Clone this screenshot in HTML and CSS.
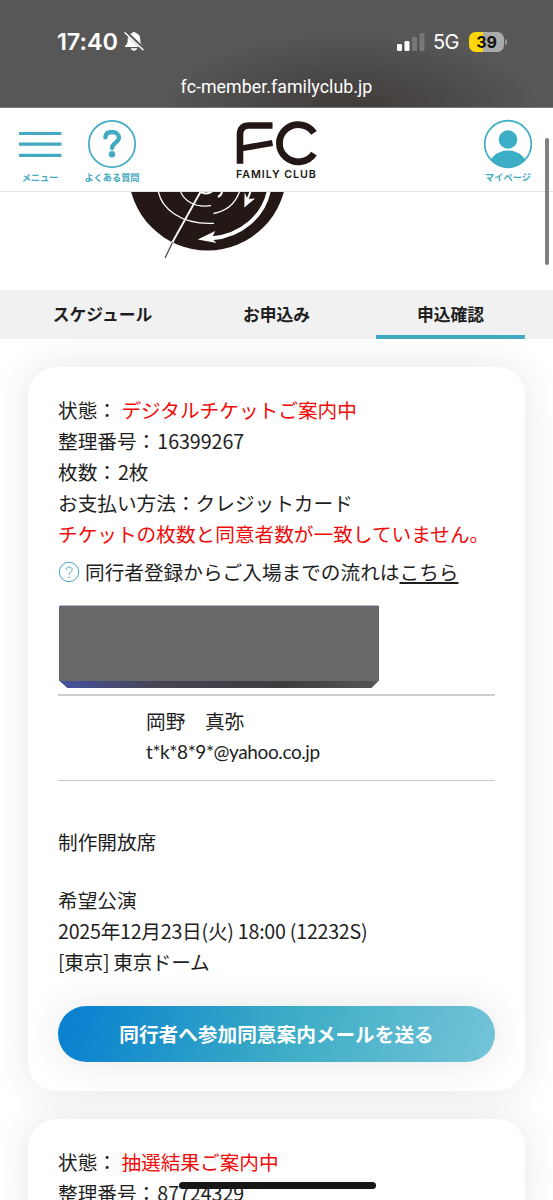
FILE: index.html
```html
<!DOCTYPE html>
<html lang="ja">
<head>
<meta charset="utf-8">
<title>FAMILY CLUB</title>
<link rel="stylesheet" href="styles.css">
</head>
<body>
<div class="browser">
  <div class="status">
    <div class="clock">
      <span class="time">17:40</span>
      <svg class="bell" viewBox="0 0 20 21" width="20" height="21"><path d="M1 15c2.200-2 2.700-3 2.700-6.500C3.700 4.500 6 2.500 8.300 2 8.500.5 11.500.5 11.700 2 14 2.500 16.300 4.500 16.300 8.500c0 3.500.5 4.500 2.700 6.500v1H1zM6.800 17.300h6.400c-.4 3.300-6 3.300-6.400 0z" fill="#fff"/><path d="M1.500 1l18 17" stroke="#555" stroke-width="3.600"/><path d="M1 1.800l18 17" stroke="#fff" stroke-width="1.500" stroke-linecap="round"/></svg>
    </div>
    <div class="radio">
      <svg class="bars" viewBox="0 0 28 18" width="28" height="18"><rect x="0" y="11" width="5" height="7" rx="1.300" fill="#fff"/><rect x="7.500" y="8" width="5" height="10" rx="1.300" fill="#fff"/><rect x="15" y="4" width="5" height="14" rx="1.300" fill="#777"/><rect x="22.500" y="0" width="5" height="18" rx="1.300" fill="#777"/></svg>
      <span class="network">5G</span>
      <span class="battery">39</span><span class="battery-tip"></span>
    </div>
  </div>
  <div class="address">fc-member.familyclub.jp</div>
</div>

<header class="header">
  <a class="nav nav-menu">
    <svg viewBox="0 0 44 50" width="44" height="50"><path d="M1 14.500h42.500M1 25.200h42.500M1 36.300h42.500" stroke="#42aac1" stroke-width="3.200"/></svg>
    <span>メニュー</span>
  </a>
  <a class="nav nav-faq">
    <svg viewBox="0 0 50 50" width="50" height="50"><circle cx="25" cy="25" r="23.200" fill="none" stroke="#42aac1" stroke-width="1.700"/><path d="M18.400 18.300c.2-3.700 3-5.300 6.700-5.300 3.900 0 6.800 2.200 6.800 5.800 0 5-6.900 5-6.900 10.400" fill="none" stroke="#42aac1" stroke-width="4.300" stroke-linecap="round"/><circle cx="25" cy="35.300" r="3.200" fill="#42aac1"/></svg>
    <span>よくある質問</span>
  </a>
  <div class="brand">
    <svg viewBox="0 0 82 46" width="82" height="46"><path d="M4 42.800V13.500q0-9 9-9H36.500" fill="none" stroke="#231815" stroke-width="6.600"/><path d="M4 27.600L36.500 22" fill="none" stroke="#231815" stroke-width="6"/><path d="M78 11.800A18.900 18.600 0 1 0 78 32.600" fill="none" stroke="#231815" stroke-width="6.800"/></svg>
    <span class="brand-name">FAMILY CLUB</span>
  </div>
  <a class="nav nav-mypage">
    <svg viewBox="0 0 50 50" width="50" height="50"><clipPath id="face"><circle cx="25" cy="25" r="23.500"/></clipPath><g clip-path="url(#face)" fill="#3badc5"><circle cx="25" cy="20.500" r="9.300"/><ellipse cx="25" cy="48" rx="19" ry="16.500"/></g><circle cx="25" cy="25" r="23.300" fill="none" stroke="#3badc5" stroke-width="1.700"/></svg>
    <span>マイページ</span>
  </a>
</header>
<div class="scrollbar"></div>

<div class="hero">
  <svg viewBox="0 192 553 98" width="553" height="98">
    <circle cx="207.500" cy="171.500" r="79" fill="#231815"/>
    <g fill="none" stroke="#fff">
      <path d="M158 190c3 18 22 35 56 33.300" stroke-width="1.300"/>
      <path d="M180 190c3 10 14 18 31 15.700" stroke-width="1.200"/>
      <path d="M240 190c-4 13-13 21-26.500 23.500" stroke-width="1.300"/>
      <path d="M200 191.500q6 4 12 0" stroke-width="2"/>
      <path d="M222 191q0 4-4 6" stroke-width="2"/>
      <path d="M269 190c-5 26-28 46-57 48.300" stroke-width="4"/>
      <path d="M251 190l-4 11" stroke-width="2"/>
      <path d="M201 191l-29 52" stroke-width="1.900"/>
    </g>
    <path d="M197.700 239.500l17.500-8.500-3.500 7.500 5 4.500zM244.300 207.500l.3-15 3 6.500 7.500-.5z" fill="#fff"/>
    <path d="M172.500 242.500l-7.500 15.500" stroke="#514845" stroke-width="1.300"/>
  </svg>
</div>

<nav class="tabs">
  <a class="tab">スケジュール</a>
  <a class="tab">お申込み</a>
  <a class="tab tab-active">申込確認</a>
</nav>

<main class="list">
  <section class="card">
    <p>状態： <span class="alert">デジタルチケットご案内中</span></p>
    <p>整理番号：<span class="num">16399267</span></p>
    <p>枚数：<span class="num">2</span>枚</p>
    <p>お支払い方法：クレジットカード</p>
    <p class="alert">チケットの枚数と同意者数が一致していません。</p>
    <p class="guide"><svg viewBox="0 0 22 22" width="22" height="22"><circle cx="11" cy="11" r="9.700" fill="none" stroke="#42aac1"/><path d="M8 9c0-4 6.200-4 6.200-.3 0 2.500-3.200 2.800-3.200 5.100" fill="none" stroke="#42aac1"/><circle cx="11" cy="16.200" r=".8" fill="#42aac1"/></svg><span>同行者登録からご入場までの流れは<a class="link">こちら</a></span></p>
    <div class="masked"></div>
    <div class="companion">
      <p>岡野　真弥</p>
      <p class="mail">t*k*8*9*@yahoo.co.jp</p>
    </div>
    <p class="seat">制作開放席</p>
    <p class="wish">希望公演</p>
    <p class="date">2025年12月23日(火) 18:00 (12232S)</p>
    <p class="venue">[東京] 東京ドーム</p>
    <a class="button">同行者へ参加同意案内メールを送る</a>
  </section>
  <section class="card">
    <p>状態： <span class="alert">抽選結果ご案内中</span></p>
    <p>整理番号：<span class="num">87724329</span></p>
  </section>
</main>
<div class="home-indicator"></div>
</body>
</html>
```
FILE: styles.css
```css
* { box-sizing: border-box; }
body {
  margin: 0;
  width: 553px;
  height: 1200px;
  overflow: hidden;
  position: relative;
  background: #fff;
  color: #1e1e1e;
  font-family: "Noto Sans CJK JP", sans-serif;
}
p { margin: 0; }

.browser {
  height: 108px;
  padding-top: 26px;
  border-bottom: 1px solid #777;
  background: radial-gradient(ellipse 190px 75px at 350px 108px, #3f3b39, rgba(63, 59, 57, 0)), #575757;
  color: #fff;
  font-family: Inter, sans-serif;
}
.status {
  display: flex;
  justify-content: space-between;
  align-items: center;
  height: 31px;
  padding: 0 46px 0 57px;
}
.clock, .radio { display: flex; align-items: center; }
.time { font-size: 23.5px; font-weight: 600; letter-spacing: -0.1px; }
.bell { margin-left: 6px; }
.network { margin-left: 8px; font-size: 20px; letter-spacing: -0.5px; }
.battery {
  width: 35px;
  height: 20px;
  margin-left: 10px;
  border-radius: 6.5px;
  background: linear-gradient(90deg, #ffd60a 14px, #aaa 14px);
  color: #111;
  font-size: 16px;
  font-weight: 700;
  line-height: 20px;
  text-align: center;
}
.battery-tip { width: 2px; height: 6px; margin-left: 1px; border-radius: 0 2px 2px 0; background: #999; }
.address {
  margin-top: 19px;
  font-family: Roboto, sans-serif;
  font-size: 17.8px;
  line-height: 21px;
  letter-spacing: 0.05px;
  text-align: center;
}

.header {
  display: grid;
  grid-template-columns: 44px 56px 1fr 50px;
  column-gap: 22px;
  height: 84px;
  padding: 11px 20px 0 18px;
  border-bottom: 1px solid #e4e4e4;
}
.nav {
  display: flex;
  flex-direction: column;
  align-items: center;
  height: 66px;
  color: #42aac1;
  font-size: 9.2px;
  font-weight: 700;
  line-height: 14px;
  white-space: nowrap;
}
.nav svg { flex: none; height: 50px; }
.nav span { margin-top: 1px; }
.brand { width: 82px; margin: 2px 0 0 74px; color: #231815; }
.brand svg { display: block; }
.brand-name {
  display: block;
  width: 84px;
  margin-top: 1px;
  font: 600 10.7px/14px Inter, sans-serif;
  letter-spacing: 0.95px;
  white-space: nowrap;
}
.scrollbar {
  position: absolute;
  top: 138px;
  right: 4px;
  width: 4px;
  height: 127px;
  border-radius: 2px;
  background: #7f7f7f;
}
.hero { height: 98px; }
.hero svg { display: block; }

.tabs {
  display: grid;
  grid-template-columns: repeat(3, 1fr);
  gap: 25px;
  height: 49px;
  padding: 0 28px;
  background: #f1f1f1;
}
.tab {
  height: 49px;
  font-size: 16.8px;
  font-weight: 700;
  line-height: 49px;
  text-align: center;
}
.tab-active { border-bottom: 4px solid #42aac1; }

.list { display: flex; flex-direction: column; gap: 28px; padding: 28px 28px 0; }
.card {
  padding: 28px 30px;
  border-radius: 28px;
  background: #fff;
  box-shadow: 0 0 38px rgba(0, 0, 0, 0.1);
  font-size: 19.67px;
  line-height: 30.9px;
  white-space: nowrap;
}
.card:first-child { height: 724px; }
.card:last-child { height: 110px; padding-bottom: 0; }
.alert { color: #f00a0a; }
.num { letter-spacing: -0.05px; margin-left: 1px; }
.guide { display: flex; align-items: center; gap: 5px; margin-top: 7px; }
.link { text-decoration: underline; text-decoration-thickness: 1.5px; text-underline-offset: 2px; }
.masked {
  width: 320px;
  height: 83px;
  margin: 18px 0 6px 1px;
  border-top: 1px solid #65739a;
  border-radius: 2px;
  background: linear-gradient(#68686a, #68686a) top / 100% 75px no-repeat, linear-gradient(90deg, #4552a0, #464654 30%, #3e3c3e 70%, #555);
  clip-path: polygon(0 0, 100% 0, 100% 75px, 312px 100%, 9px 100%, 0 75px);
}
.companion {
  height: 87px;
  padding: 10px 0 0 88px;
  border-top: 2px solid #d0cccd;
  border-bottom: 1px solid #c9c9c9;
}
.mail { font-family: Lato, sans-serif; font-size: 19px; letter-spacing: -0.4px; }
.seat { margin-top: 46px; }
.wish { margin-top: 27px; }
.date { letter-spacing: -0.25px; }
.venue { letter-spacing: -0.35px; }
.button {
  display: block;
  height: 56px;
  margin-top: 28px;
  border-radius: 28px;
  background: linear-gradient(110deg, #0a82cf 5%, #3dadc6 53%, #75c4d8);
  box-shadow: 0 0 38px rgba(0, 0, 0, 0.1);
  color: #fff;
  font-weight: 700;
  line-height: 56px;
  text-align: center;
}
.home-indicator {
  position: absolute;
  left: 179px;
  top: 1182px;
  width: 197px;
  height: 7px;
  border-radius: 4px;
  background: #171717;
}
```
